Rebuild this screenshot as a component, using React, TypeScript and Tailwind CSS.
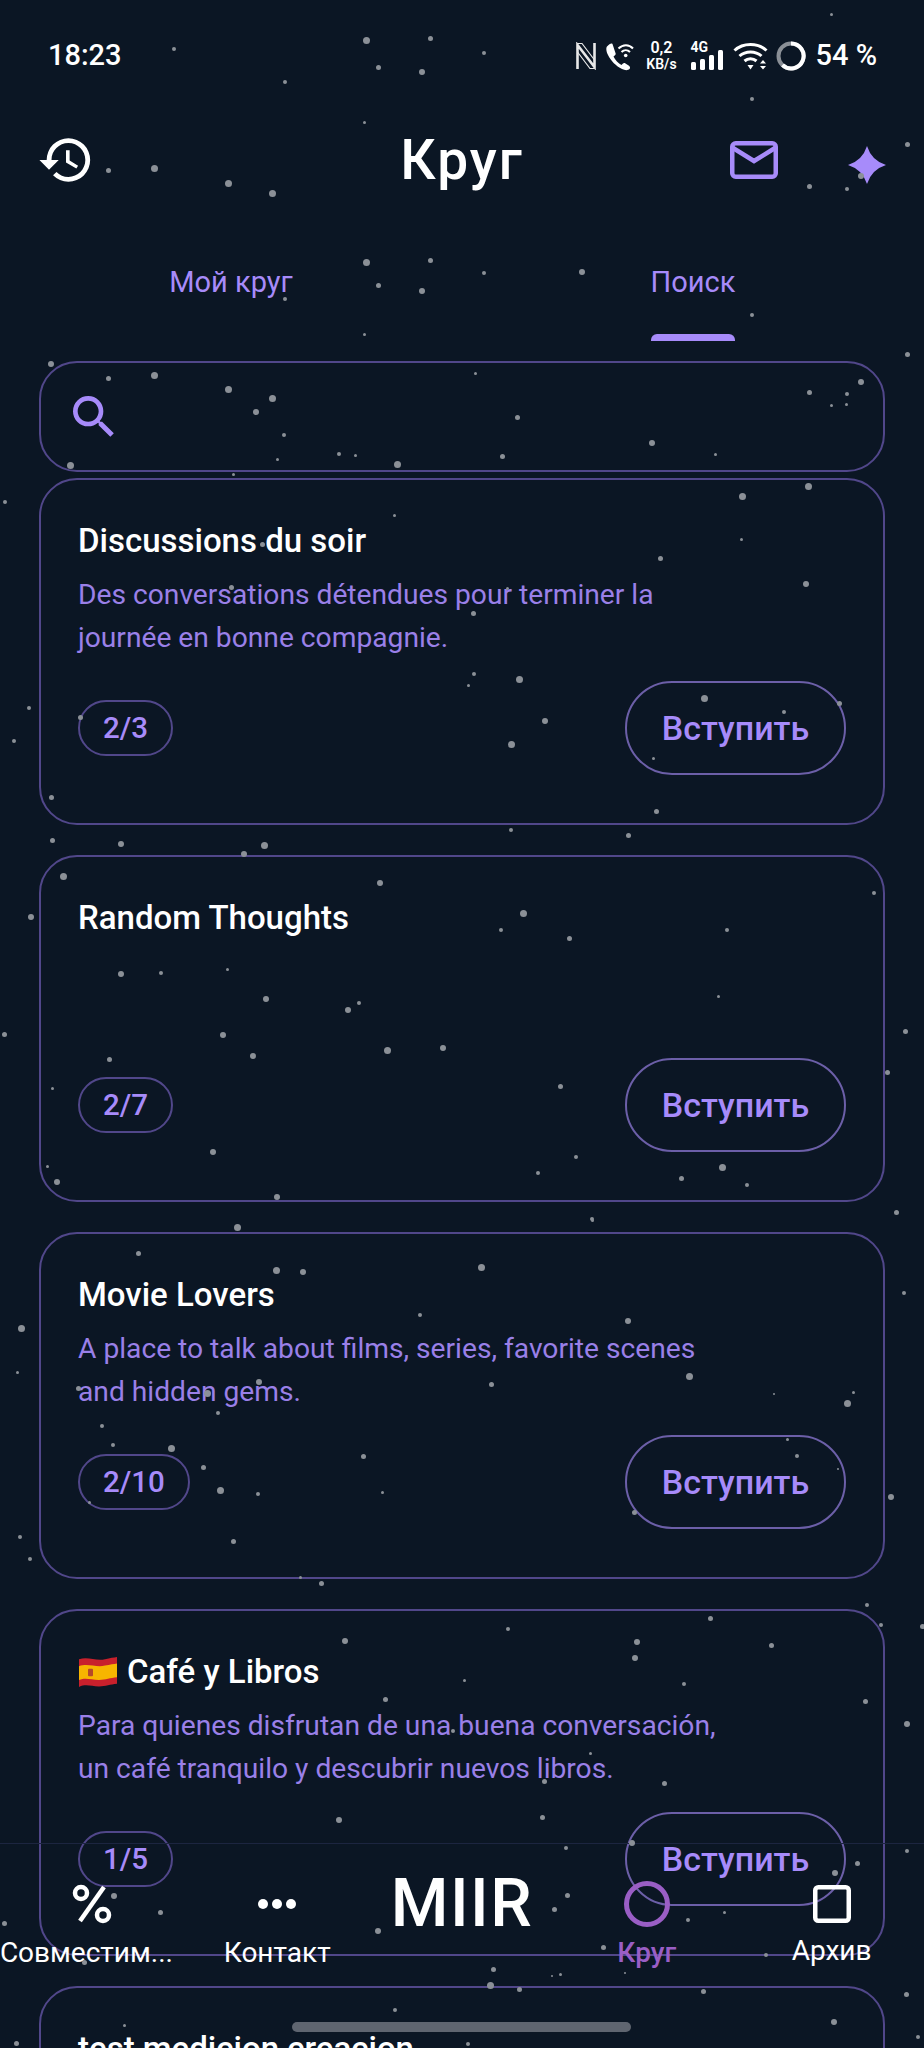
const stars: [number, number, number][] = [
  [831, 14, 3], [366, 40, 7], [430, 38, 5], [484, 53, 4], [378, 67, 5], [422, 72, 6], [285, 82, 4], [174, 49, 4],
  [752, 99, 4], [364, 122, 3], [907, 144, 5], [108, 170, 5], [154, 168, 7], [228, 183, 7], [272, 193, 7], [809, 186, 5],
  [847, 189, 4], [861, 176, 6], [366, 262, 7], [430, 260, 5], [484, 273, 4], [582, 272, 6], [378, 285, 5], [422, 291, 6],
  [285, 299, 4], [752, 315, 4], [364, 334, 3], [907, 354, 5], [51, 364, 6], [108, 378, 5], [154, 375, 7], [475, 373, 3],
  [228, 389, 7], [272, 398, 7], [256, 412, 6], [284, 435, 4], [517, 417, 5], [809, 392, 5], [847, 394, 4], [861, 382, 6],
  [831, 405, 3], [846, 404, 3], [652, 443, 6], [715, 454, 3], [502, 456, 5], [339, 454, 4], [355, 455, 3], [277, 459, 3],
  [70, 465, 7], [397, 464, 7], [233, 474, 3], [808, 486, 7], [742, 496, 7], [5, 502, 4], [394, 515, 3], [741, 539, 3],
  [660, 558, 5], [806, 584, 6], [262, 544, 5], [231, 587, 5], [473, 613, 5], [507, 588, 3], [474, 674, 4], [519, 679, 7],
  [468, 685, 3], [704, 698, 7], [784, 712, 4], [839, 703, 5], [545, 721, 6], [29, 708, 4], [14, 741, 4], [80, 717, 5],
  [511, 744, 7], [653, 758, 3], [51, 797, 5], [656, 811, 5], [511, 830, 4], [628, 835, 5], [52, 840, 5], [121, 844, 6],
  [264, 845, 7], [244, 854, 6], [63, 876, 7], [380, 883, 6], [874, 893, 4], [31, 917, 6], [523, 913, 7], [501, 930, 4],
  [569, 938, 5], [727, 930, 4], [121, 974, 6], [161, 973, 4], [227, 969, 3], [266, 999, 6], [348, 1010, 6], [359, 1003, 4],
  [718, 996, 3], [4, 1034, 5], [223, 1035, 6], [905, 1031, 5], [253, 1056, 6], [387, 1050, 7], [443, 1048, 6], [109, 1059, 5],
  [887, 1072, 5], [560, 1086, 5], [52, 1088, 3], [213, 1152, 6], [47, 1166, 3], [57, 1182, 6], [576, 1157, 4], [538, 1173, 4],
  [722, 1167, 7], [681, 1178, 5], [747, 1185, 4], [277, 1197, 6], [592, 1219, 4], [896, 1212, 5], [237, 1227, 7], [138, 1253, 5],
  [276, 1270, 7], [303, 1272, 6], [420, 1315, 4], [21, 1328, 7], [17, 1372, 3], [78, 1388, 5], [207, 1393, 7], [259, 1382, 6],
  [218, 1413, 4], [102, 1426, 4], [113, 1445, 4], [171, 1448, 7], [203, 1467, 5], [220, 1490, 7], [258, 1494, 4], [363, 1456, 5],
  [382, 1492, 3], [89, 1502, 3], [20, 1537, 4], [30, 1559, 4], [233, 1541, 5], [300, 1577, 3], [321, 1583, 5], [481, 1267, 7],
  [628, 1321, 6], [689, 1376, 7], [491, 1384, 5], [774, 1394, 2], [853, 1392, 3], [847, 1403, 7], [904, 1293, 4], [787, 1439, 3],
  [797, 1456, 4], [838, 1469, 2], [891, 1497, 6], [634, 1512, 5], [867, 1605, 4], [710, 1618, 5], [508, 1629, 4], [881, 1625, 4],
  [922, 1626, 5], [592, 1220, 3], [345, 1641, 6], [637, 1642, 6], [771, 1645, 5], [635, 1658, 6], [464, 1680, 3], [684, 1684, 4],
  [385, 1699, 5], [865, 1701, 5], [907, 1724, 6], [453, 1731, 4], [590, 1753, 3], [544, 1781, 5], [664, 1783, 5], [542, 1817, 5],
  [339, 1820, 6], [632, 1843, 6], [566, 1848, 4], [907, 1851, 4], [857, 1863, 5], [835, 1873, 6], [114, 1896, 6], [160, 1912, 5],
  [567, 1895, 5], [554, 1909, 5], [724, 1912, 3], [688, 1920, 4], [4, 1923, 5], [378, 1931, 6], [603, 1947, 5], [766, 1955, 4],
  [84, 1962, 5], [493, 1969, 5], [560, 1974, 3], [552, 1976, 2], [625, 1973, 2], [519, 1989, 5], [490, 1985, 7], [703, 1991, 5],
  [906, 1994, 5], [395, 2010, 4], [834, 2022, 6], [124, 2025, 3], [16, 2043, 5], [468, 2044, 4], [918, 2037, 4],
];

const circles = [
  {
    title: 'Discussions du soir',
    lines: ['Des conversations détendues pour terminer la', 'journée en bonne compagnie.'],
    count: '2/3',
  },
  { title: 'Random Thoughts', lines: [], count: '2/7' },
  {
    title: 'Movie Lovers',
    lines: ['A place to talk about films, series, favorite scenes', 'and hidden gems.'],
    count: '2/10',
  },
  {
    title: 'Café y Libros',
    flag: true,
    lines: ['Para quienes disfrutan de una buena conversación,', 'un café tranquilo y descubrir nuevos libros.'],
    count: '1/5',
  },
  { title: 'test medicion creacion', lines: [], count: '' },
];

function SpainFlag() {
  return (
    <svg width="40" height="32" viewBox="0 0 40 30" preserveAspectRatio="none" className="shrink-0">
      <path d="M1 3C10 0 18 5 27 3 32 2 36 1.500 39 1V26C32 26.500 28 28.500 21 28.500 13 28.500 8 26 1 29Z" fill="#c8202c" />
      <path d="M1 9.500C10 6.500 18 11 27 9 32 8 36 7.500 39 7V20C32 20.500 28 22.500 21 22.500 13 22.500 8 20 1 22.500Z" fill="#f7b500" />
      <rect x="10" y="12" width="5" height="7" rx="1" fill="#b5482a" />
    </svg>
  );
}

function Card({ item }: { item: (typeof circles)[number] }) {
  return (
    <div className="mx-[39px] flex h-[347px] shrink-0 flex-col rounded-[38px] border-2 border-[#51478a] pt-[41px] pr-[37px] pb-[48px] pl-[37px]">
      <div className="flex h-[40px] items-center gap-[9px] text-[33px] font-medium text-white">
        {item.flag && <SpainFlag />}
        <span>{item.title}</span>
      </div>
      <div className="mt-[12px] text-[28.200px] leading-[43px] text-[#9a80e8]">
        {item.lines.map((line) => (
          <div key={line}>{line}</div>
        ))}
      </div>
      {item.count && (
        <div className="mt-auto flex items-center justify-between">
          <span className="flex h-[56px] items-center rounded-full border-2 border-[#51478a] px-[23px] text-[29.500px] font-medium text-[#a78bfa]">
            {item.count}
          </span>
          <button className="h-[94px] w-[221px] rounded-full border-2 border-[#6c5fa8] text-[34px] font-medium text-[#a78bfa]">
            Вступить
          </button>
        </div>
      )}
    </div>
  );
}

function StatusIcons() {
  return (
    <div className="flex items-center text-white">
      <svg width="20" height="28" viewBox="0 0 20 28" fill="none" stroke="#e8e8e8" strokeWidth="2.600" className="mr-[9px]">
        <path d="M1.500 27V3L18.500 25V1" />
        <path d="M1.500 1.500H6L18.500 18M1.500 10L14 26.500H18.500" strokeWidth="1.200" />
      </svg>
      <svg width="29" height="29" viewBox="0 0 29 29" fill="none" className="mr-[11px]">
        <path d="M2 4.500C1 5.500 1 9 3 13c3 6 8 11 14 14 3 1.500 6 1.500 7.500 0 1-1 .5-2.500-.5-3.200l-3.500-2.300c-1-.7-2-.5-2.800.3l-1.200 1.200c-3-1.500-6.500-5-8-8.500l1.500-1.300c.8-.8.9-1.800.3-2.800L7.500 2C6.500.8 4.500 1.800 2 4.500Z" fill="#fff" />
        <path d="M13.500 6.500C18 2 24 2 28 6.500M16.500 10c2.500-2.500 6-2.500 8.500 0" stroke="#fff" strokeWidth="2" />
        <circle cx="20.700" cy="13.500" r="1.800" fill="#fff" />
      </svg>
      <div className="mr-[14px] flex w-[32px] flex-col items-center font-semibold">
        <span className="text-[16px] leading-[17px]">0,2</span>
        <span className="text-[14px] leading-[17px]">KB/s</span>
      </div>
      <div className="relative mr-[9px] h-[28px] w-[33px]">
        <span className="absolute top-[-1px] left-[-1px] text-[14px] leading-[13px] font-bold">4G</span>
        <svg width="33" height="20" viewBox="0 0 33 20" fill="#fff" className="absolute bottom-0 left-0">
          <rect x="0" y="12" width="5" height="8" rx="1.500" />
          <rect x="9" y="9" width="5" height="11" rx="1.500" />
          <rect x="18" y="5" width="5" height="15" rx="1.500" />
          <rect x="27" y="0" width="5" height="20" rx="1.500" />
        </svg>
      </div>
      <svg width="35" height="28" viewBox="0 0 35 28" fill="none" stroke="#fff" strokeWidth="3" className="mr-[8px]">
        <path d="M1.500 8.500C10 .5 25 .5 33.500 8.500" />
        <path d="M6.500 14C12.500 8.500 22.500 8.500 28.500 14" />
        <path d="M11.500 19c3.500-3 8.500-3 12 0" />
        <path d="M14.500 23h6l-3 4.500Z" fill="#fff" stroke="none" />
        <path d="M27 21.500l3 -3.500 3 3.500ZM27 24l3 3.500 3-3.500Z" fill="#fff" stroke="none" />
      </svg>
      <svg width="30" height="30" viewBox="0 0 30 30" fill="none" strokeWidth="4" className="mr-[9px]">
        <circle cx="15" cy="15" r="12.500" stroke="#8a8f96" />
        <path d="M15 2.500A12.500 12.500 0 1 1 6.500 24" stroke="#fff" />
      </svg>
      <span className="text-[29px] font-medium">54 %</span>
    </div>
  );
}

export default function App() {
  return (
    <div className="relative h-[2048px] w-[924px] overflow-hidden bg-[#0b1624] font-['Roboto',sans-serif]">
      <div className="flex h-[112px] items-center justify-between pr-[47px] pl-[48px] text-white">
        <span className="text-[29px] font-medium">18:23</span>
        <StatusIcons />
      </div>

      <header className="relative flex h-[96px] items-center justify-center">
        <svg width="58" height="58" viewBox="0 0 24 24" fill="#fff" className="absolute top-[19px] left-[37px]">
          <path d="M13 3a9 9 0 0 0-9 9H1l3.890 3.890.070.140L9 12H6c0-3.870 3.130-7 7-7s7 3.130 7 7-3.130 7-7 7c-1.930 0-3.680-.790-4.940-2.060l-1.420 1.420A8.954 8.954 0 0 0 13 21a9 9 0 0 0 0-18zm-1 5v5l4.280 2.540.720-1.210-3.500-2.080V8H12z" />
        </svg>
        <h1 className="text-[55px] font-medium tracking-[2px] text-white">Круг</h1>
        <svg width="48" height="38" viewBox="0 0 48 38" fill="none" stroke="#a78bfa" strokeWidth="4.500" className="absolute top-[29px] left-[730px]">
          <rect x="2.250" y="2.250" width="43.500" height="33.500" rx="3.500" />
          <path d="M3 7L24 20 45 7" />
        </svg>
        <svg width="38" height="38" viewBox="0 0 38 38" fill="#a78bfa" className="absolute top-[34px] left-[848px]">
          <path d="M19 0Q23.500 14.500 38 19 23.500 23.500 19 38 14.500 23.500 0 19 14.500 14.500 19 0Z" />
        </svg>
      </header>

      <nav className="flex pt-[54px]">
        {['Мой круг', 'Поиск'].map((tab, i) => (
          <div key={tab} className="flex flex-1 justify-center">
            <div className="flex flex-col items-center">
              <span className="text-[29px] leading-[40px] text-[#a78bfa]">{tab}</span>
              <span className={i === 1 ? 'mt-[32px] h-[7px] w-full rounded-t-[6px] bg-[#a78bfa]' : 'mt-[32px] h-[7px]'} />
            </div>
          </div>
        ))}
      </nav>

      <div className="mx-[39px] mt-[20px] flex h-[111px] items-center rounded-[38px] border-2 border-[#51478a] pl-[25px]">
        <svg width="56" height="56" viewBox="0 0 24 24" fill="#a78bfa">
          <path d="M15.500 14h-.790l-.280-.270A6.471 6.471 0 0 0 16 9.500 6.500 6.500 0 1 0 9.500 16c1.610 0 3.090-.590 4.230-1.570l.270.280v.790l5 4.990L20.490 19l-4.990-5zm-6 0C7.010 14 5 11.990 5 9.500S7.010 5 9.500 5 14 7.010 14 9.500 11.990 14 9.500 14z" />
        </svg>
      </div>

      <main className="mt-[6px] flex flex-col gap-[30px]">
        {circles.map((item) => (
          <Card key={item.title} item={item} />
        ))}
      </main>

      {/* bottom nav lies over the list */}
      <div className="absolute top-[1843px] right-0 left-0 grid h-[205px] grid-cols-5 border-t border-[#1c2540] text-[28px] text-white">
        <div className="flex flex-col items-center">
          <svg width="40" height="40" viewBox="0 0 40 40" fill="none" stroke="#fff" strokeWidth="4.500" className="mt-[40px]">
            <circle cx="9" cy="9" r="6" />
            <circle cx="31" cy="31" r="6" />
            <path d="M32 3L8 37" />
          </svg>
          <span className="mt-[9px] -translate-x-[6px] leading-[40px] whitespace-nowrap">Совместим...</span>
        </div>
        <div className="flex flex-col items-center">
          <div className="mt-[40px] flex h-[40px] items-center gap-[4px]">
            <span className="size-[10px] rounded-full bg-white" />
            <span className="size-[10px] rounded-full bg-white" />
            <span className="size-[10px] rounded-full bg-white" />
          </div>
          <span className="mt-[9px] leading-[40px]">Контакт</span>
        </div>
        <div className="flex flex-col items-center">
          <span className="mt-[23px] text-[66px] leading-[74px] font-medium tracking-[1.500px]">MIIR</span>
        </div>
        <div className="flex flex-col items-center">
          <svg width="46" height="46" viewBox="0 0 46 46" fill="none" stroke="#9a5ec5" strokeWidth="5" className="mt-[37px]">
            <circle cx="23" cy="23" r="20.500" />
          </svg>
          <span className="mt-[6px] leading-[40px] font-medium text-[#9a5ec5]">Круг</span>
        </div>
        <div className="flex flex-col items-center">
          <svg width="38" height="38" viewBox="0 0 38 38" fill="none" stroke="#fff" strokeWidth="4.500" className="mt-[41px]">
            <rect x="2.250" y="2.250" width="33.500" height="33.500" rx="3" />
          </svg>
          <span className="mt-[8px] leading-[40px]">Архив</span>
        </div>
      </div>

      <div className="absolute top-[2022px] left-[292px] h-[10px] w-[339px] rounded-full bg-[#5f6570]" />

      {stars.map(([x, y, d], i) => (
        <span
          key={i}
          className="pointer-events-none absolute rounded-full bg-[#8b9097]"
          style={{ left: x - d / 2, top: y - d / 2, width: d, height: d }}
        />
      ))}
    </div>
  );
}
